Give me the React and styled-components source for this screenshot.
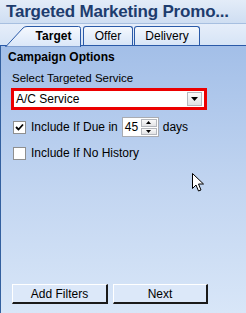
import React from "react";
import styled, { createGlobalStyle } from "styled-components";

const GlobalStyle = createGlobalStyle`
  html, body {
    margin: 0;
    padding: 0;
    overflow: hidden;
  }
  body {
    font-family: "Liberation Sans", Arial, sans-serif;
  }
`;

const Window = styled.div`
  position: relative;
  width: 246px;
  height: 313px;
  display: flex;
  flex-direction: column;
  background: #dfeaf8;
  overflow: hidden;
`;

const TitleBar = styled.div`
  height: 23px;
  padding-left: 6px;
  display: flex;
  align-items: center;
  font-size: 17px;
  letter-spacing: -0.2px;
  font-weight: bold;
  color: #1d3c6e;
  white-space: nowrap;
  background: linear-gradient(#e3ecf8, #cfdef2);
  border-bottom: 1px solid #a7bfe0;
`;

const TabStrip = styled.div`
  height: 21px;
  display: flex;
  align-items: flex-end;
  padding-left: 5px;
  background: linear-gradient(#e6eefa, #d6e4f6);
  border-bottom: 1px solid #2a5aa8;
`;

const Tab = styled.div`
  position: relative;
  height: ${(p) => (p.$active ? 21 : 19)}px;
  width: ${(p) => p.$w}px;
  box-sizing: border-box;
  display: flex;
  align-items: center;
  justify-content: center;
  padding-left: ${(p) => (p.$active ? 20 : 0)}px;
  margin-bottom: ${(p) => (p.$active ? -1 : 0)}px;
  font-size: 12px;
  font-weight: ${(p) => (p.$active ? "bold" : "normal")};
  color: #000;
  background: ${(p) => (p.$active ? "transparent" : "linear-gradient(#f4f8fd, #d7e5f7)")};
  border: ${(p) => (p.$active ? "none" : "1px solid #2a5aa8")};
  border-bottom: none;
  border-radius: 3px 3px 0 0;
  margin-left: ${(p) => (p.$active ? 0 : 1)}px;
  span {
    position: relative;
  }
`;

const TabShape = styled.svg`
  position: absolute;
  left: 0;
  top: 0;
`;

const Panel = styled.div`
  flex: 1;
  display: flex;
  flex-direction: column;
  padding: 4px 0 9px 7px;
  border-left: 1px solid #33609f;
  background: linear-gradient(#a3bfe8, #c3d6f1 55%, #d8e6f8);
  font-size: 12px;
  color: #000;
`;

const GroupTitle = styled.div`
  font-weight: bold;
  height: 15px;
`;

const FieldLabel = styled.div`
  margin: 7px 0 0 4px;
  height: 15px;
  font-size: 11.5px;
`;

const Select = styled.div`
  margin: 1px 0 0 3px;
  width: 196px;
  height: 22px;
  box-sizing: border-box;
  border: 3px solid #ec0000;
  background: #fff;
  display: flex;
  align-items: center;
  justify-content: space-between;
  padding: 0 2px 0 2px;
  font-size: 12px;
`;

const DropButton = styled.div`
  width: 15px;
  height: 14px;
  box-sizing: border-box;
  border: 1px solid #b5b8be;
  background: linear-gradient(#fbfbfb, #e1e2e4);
  display: flex;
  align-items: center;
  justify-content: center;
`;

const CheckRow = styled.label`
  display: flex;
  align-items: center;
  gap: 5px;
  margin-left: 5px;
  margin-top: ${(p) => p.$top}px;
  height: 20px;
  font-size: 12px;
`;

const Box = styled.span`
  width: 13px;
  height: 13px;
  box-sizing: border-box;
  border: 1px solid #8f8f8f;
  background: #fff;
  display: inline-flex;
  align-items: center;
  justify-content: center;
`;

const Spinner = styled.span`
  width: 37px;
  height: 20px;
  box-sizing: border-box;
  border: 1px solid #a9acb2;
  background: #fff;
  display: inline-flex;
  align-items: center;
  justify-content: space-between;
  padding: 1px 1px 1px 2px;
  margin-left: -1px;
  margin-right: -1px;
`;

const SpinButtons = styled.span`
  display: flex;
  flex-direction: column;
  width: 16px;
  height: 16px;
  gap: 1px;
`;

const SpinHalf = styled.span`
  flex: 1;
  border: 1px solid #b4b7bd;
  background: linear-gradient(#fafafa, #e2e3e5);
  display: flex;
  align-items: center;
  justify-content: center;
`;

const ButtonRow = styled.div`
  margin-top: auto;
  margin-left: 4px;
  display: flex;
  gap: 5px;
`;

const Button = styled.button`
  width: ${(p) => p.$w}px;
  height: 20px;
  padding: 0;
  font-family: inherit;
  font-size: 12px;
  color: #000;
  background: #dce8f9;
  border-style: solid;
  border-width: 1px 2px 2px 1px;
  border-color: #fff #1a1a1a #1a1a1a #fff;
`;

const Cursor = styled.svg`
  position: absolute;
  left: 192px;
  top: 173px;
`;

const Arrow = ({ up }) => (
  <svg width="5" height="3" viewBox="0 0 5 3">
    <path d={up ? "M2.5 0 L5 3 L0 3 Z" : "M0 0 L5 0 L2.5 3 Z"} fill="#000" />
  </svg>
);

export default function App() {
  return (
    <>
      <GlobalStyle />
      <Window>
        <TitleBar>Targeted Marketing Promo...</TitleBar>
        <TabStrip>
          <Tab $active $w={77}>
            <TabShape width="77" height="22" viewBox="0 0 77 22">
              <defs>
                <linearGradient id="tg" x1="0" y1="0" x2="0" y2="1">
                  <stop offset="0" stopColor="#f6f9fe" />
                  <stop offset="1" stopColor="#d9e6f8" />
                </linearGradient>
              </defs>
              <path
                d="M0.5 22 L18 3 Q19.5 1.5 22 1.5 L73.5 1.5 Q75.5 1.5 75.5 3.5 L75.5 22 Z"
                fill="url(#tg)"
                stroke="#2a5aa8"
                strokeWidth="1"
              />
            </TabShape>
            <span>Target</span>
          </Tab>
          <Tab $w={50}>Offer</Tab>
          <Tab $w={66}>Delivery</Tab>
        </TabStrip>
        <Panel>
          <GroupTitle>Campaign Options</GroupTitle>
          <FieldLabel>Select Targeted Service</FieldLabel>
          <Select>
            <span>A/C Service</span>
            <DropButton>
              <svg width="7" height="4" viewBox="0 0 7 4">
                <path d="M0 0 L7 0 L3.5 4 Z" fill="#000" />
              </svg>
            </DropButton>
          </Select>
          <CheckRow $top={7}>
            <Box>
              <svg width="9" height="9" viewBox="0 0 9 9">
                <path d="M1 4 L3.5 6.5 L8 1.5" fill="none" stroke="#000" strokeWidth="1.8" />
              </svg>
            </Box>
            <span>Include If Due in</span>
            <Spinner>
              <span>45</span>
              <SpinButtons>
                <SpinHalf>
                  <Arrow up />
                </SpinHalf>
                <SpinHalf>
                  <Arrow />
                </SpinHalf>
              </SpinButtons>
            </Spinner>
            <span>days</span>
          </CheckRow>
          <CheckRow $top={6}>
            <Box />
            <span>Include If No History</span>
          </CheckRow>
          <ButtonRow>
            <Button $w={96}>Add Filters</Button>
            <Button $w={95}>Next</Button>
          </ButtonRow>
        </Panel>
        <Cursor width="13" height="20" viewBox="0 0 13 20">
          <path
            d="M0.5 0.5 L0.5 15.5 L4 12 L6.5 18 L9 17 L6.5 11 L11.5 11 Z"
            fill="#fff"
            stroke="#000"
            strokeWidth="1"
          />
        </Cursor>
      </Window>
    </>
  );
}
